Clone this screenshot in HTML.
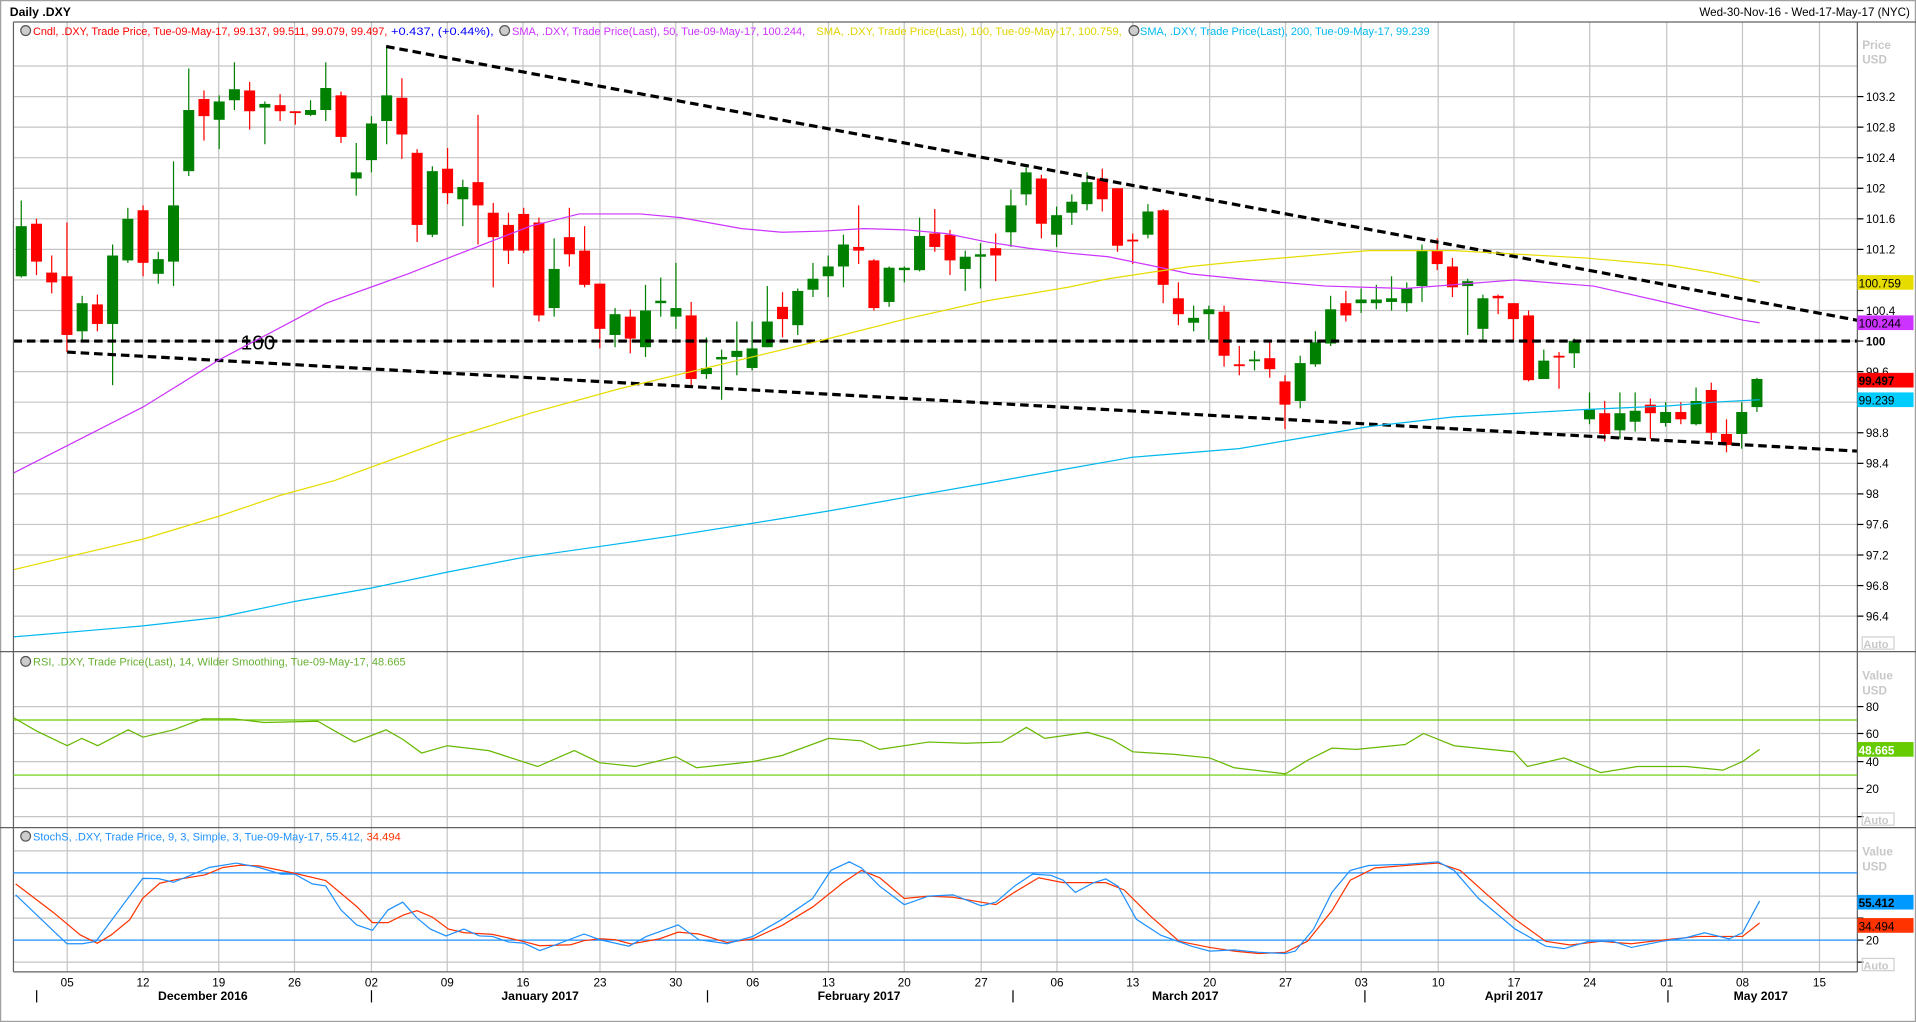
<!DOCTYPE html>
<html><head><meta charset="utf-8"><style>
html,body{margin:0;padding:0;background:#fff;overflow:hidden}
svg{display:block}
text{font-family:"Liberation Sans",Arial,sans-serif}
</style></head><body>
<svg id="s" xmlns="http://www.w3.org/2000/svg" width="1916" height="1022" viewBox="0 0 1568 836" preserveAspectRatio="none">
<rect x="0" y="0" width="1568" height="836" fill="#fff"/>
<rect x="0.5" y="0.5" width="1567" height="835" fill="none" stroke="#a0a0a0"/>
<text x="8" y="13" font-size="10" font-weight="bold" fill="#000">Daily .DXY</text>
<text x="1563" y="13" font-size="9.5" fill="#000" text-anchor="end">Wed-30-Nov-16 - Wed-17-May-17 (NYC)</text>
<g id="grid" stroke="#c4c4c4" stroke-width="1"></g>
<g id="bars"></g>
<!-- trendlines -->
<g stroke="#000" stroke-width="2.6" stroke-dasharray="7,4" fill="none">
<line x1="11" y1="279" x2="1520" y2="279"/>
<line x1="316" y1="38" x2="1520" y2="262"/>
<line x1="55" y1="288" x2="1520" y2="369"/>
</g>
<text x="197" y="286" font-size="17" fill="#000">100</text>
<!-- MAs -->
<polyline fill="none" stroke="#cc33ff" stroke-width="1" points="11,387 117,333 180,294 267,248 334,224 367,211 434,185 474,175 524,175 557,178 607,187 640,190 674,189 707,187 741,188 774,191 808,198 841,203 874,207 907,210 941,217 974,224 1014,228 1085,234 1150,236 1240,229 1304,234 1353,245 1427,262 1440,264"/>
<polyline fill="none" stroke="#e6dc00" stroke-width="1" points="11,466 117,441 180,422 230,405 274,393 367,359 434,338 507,318 674,278 741,261 808,246 874,235 907,228 974,218 1014,214 1120,205 1190,205 1297,211 1366,217 1402,223 1440,231"/>
<polyline fill="none" stroke="#00b8f0" stroke-width="1" points="11,521 117,512 179,505 241,492 304,481 366,468 428,456 491,447 553,438 616,428 678,418 740,407 803,396 865,385 927,374 1014,367 1120,349 1190,341 1297,335 1366,332 1402,329 1440,327"/>
<!-- panel borders -->
<g stroke="#606060" stroke-width="1" fill="none">
<line x1="11" y1="18" x2="11" y2="795"/>
<line x1="11" y1="18" x2="1568" y2="18"/>
<line x1="1520" y1="18" x2="1520" y2="795"/>
<line x1="0" y1="533" x2="1568" y2="533"/>
<line x1="0" y1="677" x2="1568" y2="677"/>
<line x1="11" y1="795" x2="1520" y2="795"/>
</g>
<!-- legend -->
<g font-size="9.4">
<circle cx="21" cy="25" r="4" fill="#ccc" stroke="#555"/>
<text x="27" y="28.5" fill="#ff0000" textLength="290" lengthAdjust="spacingAndGlyphs">Cndl, .DXY, Trade Price, Tue-09-May-17, 99.137, 99.511, 99.079, 99.497,</text>
<text x="320" y="28.5" fill="#0000ff" textLength="84" lengthAdjust="spacingAndGlyphs">+0.437, (+0.44%),</text>
<circle cx="413" cy="25" r="4" fill="#ccc" stroke="#555"/>
<text x="419" y="28.5" fill="#cc33ff" textLength="240" lengthAdjust="spacingAndGlyphs">SMA, .DXY, Trade Price(Last),  50, Tue-09-May-17, 100.244,</text>
<text x="668" y="28.5" fill="#e0d400" textLength="250" lengthAdjust="spacingAndGlyphs">SMA, .DXY, Trade Price(Last),  100, Tue-09-May-17, 100.759,</text>
<circle cx="928" cy="25" r="4" fill="#ccc" stroke="#555"/>
<text x="933" y="28.5" fill="#00b8f0" textLength="237" lengthAdjust="spacingAndGlyphs">SMA, .DXY, Trade Price(Last),  200, Tue-09-May-17, 99.239</text>
<circle cx="21" cy="541" r="4" fill="#ccc" stroke="#555"/>
<text x="27" y="544.5" fill="#66b032" textLength="305" lengthAdjust="spacingAndGlyphs">RSI, .DXY, Trade Price(Last), 14, Wilder Smoothing, Tue-09-May-17, 48.665</text>
<circle cx="21" cy="684" r="4" fill="#ccc" stroke="#555"/>
<text x="27" y="687.5" fill="#1e90ff" textLength="270" lengthAdjust="spacingAndGlyphs">StochS, .DXY, Trade Price,  9, 3, Simple, 3, Tue-09-May-17, 55.412,</text>
<text x="300" y="687.5" fill="#ff3300" textLength="28" lengthAdjust="spacingAndGlyphs">34.494</text>
</g>
<!-- RSI -->
<line x1="11" y1="589" x2="1520" y2="589" stroke="#66cc00"/>
<line x1="11" y1="634" x2="1520" y2="634" stroke="#66cc00"/>
<polyline fill="none" stroke="#66b800" stroke-width="1" points="11,587 30,598 55,610 67,604 80,610 105,597 117,603 142,597 166,588 191,588 216,591 260,590 290,607 316,597 330,605 345,616 366,610 400,614 440,627 470,614 491,624 520,627 553,619 570,628 616,623 640,618 678,604 705,606 720,613 760,607 790,608 820,607 840,595 855,604 890,599 910,605 927,615 960,617 990,620 1010,628 1052,633 1070,622 1090,612 1110,613 1150,609 1165,600 1190,610 1239,615 1250,627 1280,620 1300,628 1310,632 1340,627 1380,627 1410,630 1426,623 1440,613"/>
<!-- Stoch -->
<line x1="11" y1="714" x2="1520" y2="714" stroke="#1e90ff"/>
<line x1="11" y1="769" x2="1520" y2="769" stroke="#1e90ff"/>
<polyline fill="none" stroke="#ff3300" stroke-width="1" points="12.8,723 43.8,746.5 65.7,764.8 79.6,771.6 91,764.8 106,752.5 116.8,734.8 130.7,722.5 146,719.2 168,715.6 182.5,709.6 197,707.7 211.7,708.3 241,714.3 266.5,720.3 292,741.6 304.8,754.7 317.6,754.7 330.3,748.4 341.3,744.9 354,750.3 366.8,759.9 379.6,762.9 403,764.3 429,770.3 441.7,773.6 467,772.8 478,769.5 491,767.9 503.7,768.7 516.5,772.2 540,767.9 555,762.5 572,764 595,771 616,768 640,757 665,742 690,722 705,712 720,718 740,735 760,733 780,734 803,738 815,740 830,730 850,718 870,722 890,722 905,722 920,728 940,748 965,770 990,775 1010,778 1030,780 1052,779 1070,770 1090,745 1105,720 1125,710 1150,708 1177,706 1195,712 1215,730 1240,752 1265,770 1285,773 1310,770 1335,772 1360,769 1390,766 1410,766 1426,766 1440,755"/>
<polyline fill="none" stroke="#1e90ff" stroke-width="1" points="12.8,732 54.8,772 67.5,772 78.5,770 116.8,718.5 129.6,718.7 142,721.7 171.6,709.5 193.5,706 211.7,709.5 230,715 241,715 255.6,723 266.5,724.7 279,744.3 292,756.6 304.8,761 317.6,744.3 329.6,738 341.3,751 352.2,760 365,765.6 379.6,760 392.4,765.6 403,766 416,770.5 429,771.6 441.7,777.6 454.4,773 478,764 491,768.7 514.7,774 529,766 555,756.6 572,768.7 595,772 616,766 640,752 665,735 680,712 695,705 705,710 720,725 740,740 760,733 780,732 803,741 815,738 830,725 845,715 860,716 870,720 880,730 895,722 905,719 915,725 930,752 950,765 975,774 990,778 1010,777 1030,779 1052,780 1060,778 1075,760 1090,730 1105,712 1120,708 1150,707 1177,705 1190,712 1210,735 1240,760 1265,774 1280,776 1300,770 1320,770 1335,775 1360,770 1380,767 1395,763 1415,768 1426,763 1440,737"/>
<!-- right axis -->
<g id="axis" font-size="9.6" fill="#000"></g>
<g font-size="9.6" font-weight="bold" fill="#c8c8c8">
<text x="1524" y="40">Price</text><text x="1524" y="52">USD</text>
<text x="1524" y="556">Value</text><text x="1524" y="568">USD</text>
<text x="1524" y="700">Value</text><text x="1524" y="712">USD</text>
</g>
<g font-size="9" fill="#c8c8c8" font-weight="bold">
<rect x="1524" y="521" width="26" height="10" fill="none" stroke="#d0d0d0"/><text x="1525" y="530">Auto</text>
<rect x="1524" y="665" width="26" height="10" fill="none" stroke="#d0d0d0"/><text x="1525" y="674">Auto</text>
<rect x="1524" y="784" width="26" height="10" fill="none" stroke="#d0d0d0"/><text x="1525" y="793">Auto</text>
</g>
<g font-size="9.6">
<rect x="1520" y="225" width="46" height="12" fill="#e6dc00"/><text x="1521" y="235" fill="#000">100.759</text>
<rect x="1520" y="258" width="46" height="12" fill="#cc33ff"/><text x="1521" y="268" fill="#000">100.244</text>
<rect x="1520" y="305" width="46" height="12" fill="#ff0000"/><text x="1521" y="315" fill="#000" font-weight="bold">99.497</text>
<rect x="1520" y="321" width="46" height="12" fill="#00ccff"/><text x="1521" y="331" fill="#000">99.239</text>
<rect x="1520" y="607" width="46" height="12" fill="#66cc00"/><text x="1521" y="617" fill="#fff" font-weight="bold">48.665</text>
<rect x="1520" y="732" width="46" height="12" fill="#0099ff"/><text x="1521" y="742" fill="#000" font-weight="bold">55.412</text>
<rect x="1520" y="751" width="46" height="12" fill="#ff3300"/><text x="1521" y="761" fill="#000">34.494</text>
</g>
<!-- bottom axis -->
<g font-size="9.6" fill="#000" text-anchor="middle">
<text x="55" y="807">05</text><text x="117" y="807">12</text><text x="179" y="807">19</text><text x="241" y="807">26</text>
<text x="304" y="807">02</text><text x="366" y="807">09</text><text x="428" y="807">16</text><text x="491" y="807">23</text><text x="553" y="807">30</text>
<text x="616" y="807">06</text><text x="678" y="807">13</text><text x="740" y="807">20</text><text x="803" y="807">27</text>
<text x="865" y="807">06</text><text x="927" y="807">13</text><text x="990" y="807">20</text><text x="1052" y="807">27</text>
<text x="1114" y="807">03</text><text x="1177" y="807">10</text><text x="1239" y="807">17</text><text x="1301" y="807">24</text>
<text x="1364" y="807">01</text><text x="1426" y="807">08</text><text x="1489" y="807">15</text>
</g>
<g font-size="10" font-weight="bold" fill="#000" text-anchor="middle">
<text x="166" y="818">December 2016</text><text x="442" y="818">January 2017</text><text x="703" y="818">February 2017</text>
<text x="970" y="818">March 2017</text><text x="1239" y="818">April 2017</text><text x="1441" y="818">May 2017</text>
</g>
<g stroke="#000" stroke-width="1">
<line x1="30" y1="810" x2="30" y2="820"/><line x1="304" y1="810" x2="304" y2="820"/><line x1="579" y1="810" x2="579" y2="820"/>
<line x1="829" y1="810" x2="829" y2="820"/><line x1="1117" y1="810" x2="1117" y2="820"/><line x1="1365" y1="810" x2="1365" y2="820"/>
</g>
</svg>
<script>
(function(){
var NS="http://www.w3.org/2000/svg";
function el(p,t,a){var e=document.createElementNS(NS,t);for(var k in a)e.setAttribute(k,a[k]);p.appendChild(e);return e;}
var g=document.getElementById('grid');
var vx=[55,117,179,241,304,366,428,491,553,616,678,740,803,865,927,990,1052,1114,1177,1239,1301,1364,1426,1489];
vx.forEach(function(x){el(g,'line',{x1:x,y1:18,x2:x,y2:795});});
for(var i=0;i<18;i++){var y=79+i*25;el(g,'line',{x1:11,y1:y,x2:1520,y2:y});}
el(g,'line',{x1:11,y1:54,x2:1520,y2:54});
[578,600,623,645,668].forEach(function(y){el(g,'line',{x1:11,y1:y,x2:1520,y2:y});});
[696,733,751,787].forEach(function(y){el(g,'line',{x1:11,y1:y,x2:1520,y2:y});});
var ax=document.getElementById('axis');
var labs=["103.2","102.8","102.4","102","101.6","101.2","100.8","100.4","100","99.6","99.2","98.8","98.4","98","97.6","97.2","96.8","96.4"];
labs.forEach(function(l,i){var y=79+i*25;el(ax,'line',{x1:1520,y1:y,x2:1525,y2:y,stroke:'#000'});var t=el(ax,'text',{x:1527,y:y+3.5});if(l=="100")t.setAttribute('font-weight','bold');t.textContent=l;});
[[578,"80"],[600,"60"],[623,"40"],[645,"20"],[668,""],[769,"20"],[733,""],[751,""],[787,""]].forEach(function(a){el(ax,'line',{x1:1520,y1:a[0],x2:1525,y2:a[0],stroke:'#000'});if(a[1]){var t=el(ax,'text',{x:1527,y:a[0]+3.5});t.textContent=a[1];}});
var D=[
[185,226,164,227,1],[183,214,179,225,0],[223,231,209,240,0],[226,274,182,288,0],[248,271,242,280,1],[249,265,241,271,0],[209,265,200,315,1],[179,213,170,215,1],[172,215,168,226,0],[212,224,206,232,1],
[168,214,132,234,1],[90,140,56,144,1],[81,95,74,115,0],[83,98,78,122,1],[73,82,51,90,1],[74,91,67,106,0],[85,88,83,118,1],[86,91,77,99,0],[91,92,91,102,0],[90,94,82,95,1],
[72,90,51,99,1],[78,112,75,117,0],[141,146,117,160,1],[101,131,95,141,1],[78,99,38,118,1],[80,110,64,130,0],[125,184,122,198,0],[140,192,136,194,1],[138,158,121,167,0],[153,163,147,185,1],
[149,168,94,200,0],[174,194,166,235,0],[184,205,174,216,0],[175,205,170,207,0],[182,258,178,263,0],[220,252,195,259,1],[194,208,170,218,0],[205,233,185,235,0],[232,269,232,285,0],[257,274,252,284,1],
[259,277,253,289,0],[254,284,233,292,1],[246,248,227,259,1],[252,259,215,269,1],[258,310,247,315,0],[301,306,276,310,1],[292,294,286,327,1],[287,292,263,307,1],[285,301,263,303,1],[263,284,234,284,1],
[251,261,239,276,0],[238,266,236,274,1],[228,237,215,243,1],[218,226,209,243,1],[200,218,192,235,1],[202,205,168,216,0],[213,252,212,254,0],[219,247,218,251,1],[219,221,218,231,1],[193,221,178,222,1],
[191,202,171,206,0],[192,213,188,225,0],[210,220,205,238,1],[208,210,199,236,1],[203,209,191,230,0],[168,190,155,202,1],[141,159,137,168,1],[146,183,143,195,0],[176,192,169,202,1],[165,174,159,184,1],
[149,167,141,172,1],[146,163,138,173,0],[154,201,154,206,0],[196,197,191,216,0],[173,192,167,195,1],[172,233,171,248,0],[244,257,231,266,0],[260,264,250,271,1],[253,257,250,278,1],[255,291,250,300,0],
[298,299,283,307,0],[294,295,287,303,1],[293,302,279,309,0],[312,331,307,351,0],[297,328,291,334,1],[280,298,271,300,1],[253,281,242,283,1],[248,258,238,263,0],[245,248,236,256,1],[245,248,233,253,1],
[244,247,226,254,1],[236,248,231,255,1],[205,234,200,247,1],[205,216,195,221,0],[218,235,211,243,0],[230,234,228,274,1],[244,269,241,278,1],[242,244,241,257,0],[248,261,248,279,0],[258,311,254,312,0],
[295,310,286,310,1],[291,292,288,318,0],[279,289,277,301,1],[335,343,321,347,1],[338,355,328,361,0],[338,352,321,359,1],[336,345,321,353,1],[331,338,326,359,0],[337,346,329,349,1],[337,343,329,347,0],
[328,347,317,348,1],[319,354,313,360,0],[355,364,343,370,0],[337,355,329,367,1],[310,333,309,337,1]];
var b=document.getElementById('bars');
D.forEach(function(d,i){var x=17.4+12.46*i;var c=d[4]?'#008000':'#ff0000';
el(b,'line',{x1:x,y1:d[2],x2:x,y2:d[3],stroke:c,'stroke-width':1});
var h=Math.max(d[1]-d[0],1.5);el(b,'rect',{x:x-4.5,y:d[0],width:9,height:h,fill:c});});
})();
</script>
</body></html>
